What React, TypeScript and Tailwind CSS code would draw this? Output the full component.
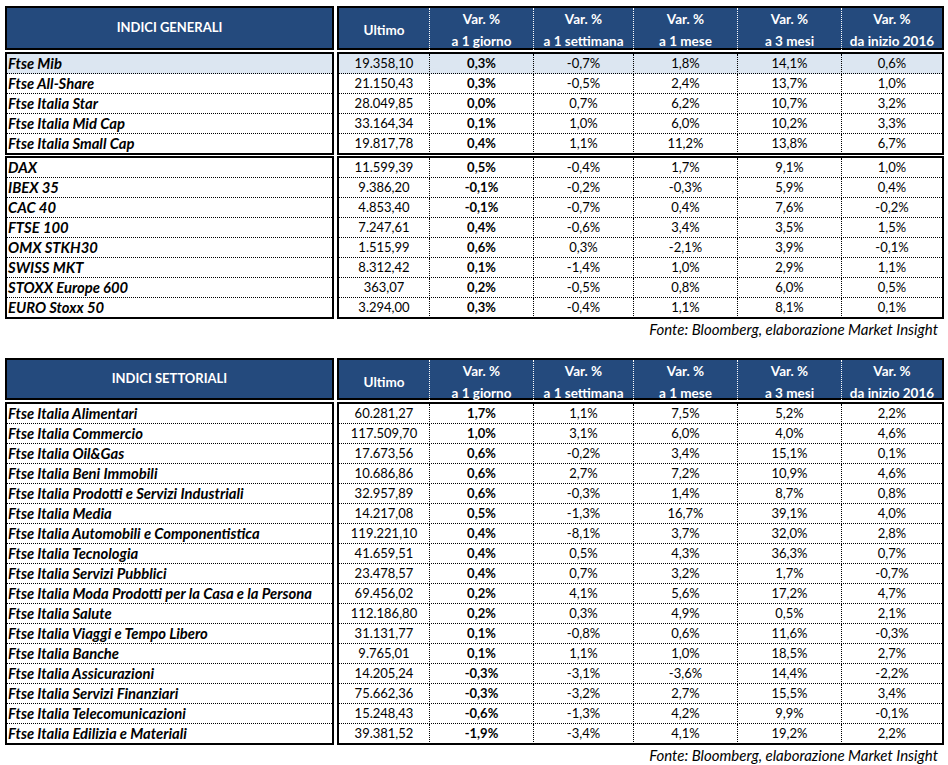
import React from "react";

type Row = [string, string, string, string, string, string, string];

const general1: Row[] = [
  ["Ftse Mib", "19.358,10", "0,3%", "-0,7%", "1,8%", "14,1%", "0,6%"],
  ["Ftse All-Share", "21.150,43", "0,3%", "-0,5%", "2,4%", "13,7%", "1,0%"],
  ["Ftse Italia Star", "28.049,85", "0,0%", "0,7%", "6,2%", "10,7%", "3,2%"],
  ["Ftse Italia Mid Cap", "33.164,34", "0,1%", "1,0%", "6,0%", "10,2%", "3,3%"],
  ["Ftse Italia Small Cap", "19.817,78", "0,4%", "1,1%", "11,2%", "13,8%", "6,7%"],
];

const general2: Row[] = [
  ["DAX", "11.599,39", "0,5%", "-0,4%", "1,7%", "9,1%", "1,0%"],
  ["IBEX 35", "9.386,20", "-0,1%", "-0,2%", "-0,3%", "5,9%", "0,4%"],
  ["CAC 40", "4.853,40", "-0,1%", "-0,7%", "0,4%", "7,6%", "-0,2%"],
  ["FTSE 100", "7.247,61", "0,4%", "-0,6%", "3,4%", "3,5%", "1,5%"],
  ["OMX STKH30", "1.515,99", "0,6%", "0,3%", "-2,1%", "3,9%", "-0,1%"],
  ["SWISS MKT", "8.312,42", "0,1%", "-1,4%", "1,0%", "2,9%", "1,1%"],
  ["STOXX Europe 600", "363,07", "0,2%", "-0,5%", "0,8%", "6,0%", "0,5%"],
  ["EURO Stoxx 50", "3.294,00", "0,3%", "-0,4%", "1,1%", "8,1%", "0,1%"],
];

const sector: Row[] = [
  ["Ftse Italia Alimentari", "60.281,27", "1,7%", "1,1%", "7,5%", "5,2%", "2,2%"],
  ["Ftse Italia Commercio", "117.509,70", "1,0%", "3,1%", "6,0%", "4,0%", "4,6%"],
  ["Ftse Italia Oil&Gas", "17.673,56", "0,6%", "-0,2%", "3,4%", "15,1%", "0,1%"],
  ["Ftse Italia Beni Immobili", "10.686,86", "0,6%", "2,7%", "7,2%", "10,9%", "4,6%"],
  ["Ftse Italia Prodotti e Servizi Industriali", "32.957,89", "0,6%", "-0,3%", "1,4%", "8,7%", "0,8%"],
  ["Ftse Italia Media", "14.217,08", "0,5%", "-1,3%", "16,7%", "39,1%", "4,0%"],
  ["Ftse Italia Automobili e Componentistica", "119.221,10", "0,4%", "-8,1%", "3,7%", "32,0%", "2,8%"],
  ["Ftse Italia Tecnologia", "41.659,51", "0,4%", "0,5%", "4,3%", "36,3%", "0,7%"],
  ["Ftse Italia Servizi Pubblici", "23.478,57", "0,4%", "0,7%", "3,2%", "1,7%", "-0,7%"],
  ["Ftse Italia Moda Prodotti per la Casa e la Persona", "69.456,02", "0,2%", "4,1%", "5,6%", "17,2%", "4,7%"],
  ["Ftse Italia Salute", "112.186,80", "0,2%", "0,3%", "4,9%", "0,5%", "2,1%"],
  ["Ftse Italia Viaggi e Tempo Libero", "31.131,77", "0,1%", "-0,8%", "0,6%", "11,6%", "-0,3%"],
  ["Ftse Italia Banche", "9.765,01", "0,1%", "1,1%", "1,0%", "18,5%", "2,7%"],
  ["Ftse Italia Assicurazioni", "14.205,24", "-0,3%", "-3,1%", "-3,6%", "14,4%", "-2,2%"],
  ["Ftse Italia Servizi Finanziari", "75.662,36", "-0,3%", "-3,2%", "2,7%", "15,5%", "3,4%"],
  ["Ftse Italia Telecomunicazioni", "15.248,43", "-0,6%", "-1,3%", "4,2%", "9,9%", "-0,1%"],
  ["Ftse Italia Edilizia e Materiali", "39.381,52", "-1,9%", "-3,4%", "4,1%", "19,2%", "2,2%"],
];

const GRID = "grid grid-cols-[90px_104px_100px_104px_104px_101px]";

const subHeads = ["a 1 giorno", "a 1 settimana", "a 1 mese", "a 3 mesi", "da inizio 2016"];

function Header({ title, h }: { title: string; h: string }) {
  return (
    <div className="flex gap-[3px]">
      <div
        className={`w-[329px] ${h} border-2 border-black bg-[#244a7d] flex items-center justify-center text-white font-bold text-[13px]`}
      >
        {title}
      </div>
      <div className={`w-[607px] ${h} border-2 border-black bg-[#244a7d] text-white font-bold text-[13.5px] ${GRID}`}>
        <div className="flex items-center justify-center">Ultimo</div>
        {subHeads.map((s) => (
          <div
            key={s}
            className="border-l border-dotted border-white flex flex-col items-center justify-center leading-[22px] overflow-visible"
          >
            <span className="whitespace-nowrap">Var. %</span>
            <span className="whitespace-nowrap">{s}</span>
          </div>
        ))}
      </div>
    </div>
  );
}

function Group({ rows, highlightFirst }: { rows: Row[]; highlightFirst?: boolean }) {
  const rowCls =
    "h-[20px] border-b border-dotted border-black last:h-[19px] last:border-b-0";
  return (
    <div className="flex gap-[3px]">
      <div className="w-[329px] border-2 border-black flex flex-col">
        {rows.map((r, i) => (
          <div
            key={r[0]}
            className={`${rowCls} flex items-center pl-[1px] font-bold italic text-[14.8px] text-black whitespace-nowrap ${
              highlightFirst && i === 0 ? "bg-[#dce6f1]" : ""
            }`}
          >
            {r[0]}
          </div>
        ))}
      </div>
      <div className="w-[607px] border-2 border-black flex flex-col">
        {rows.map((r, i) => (
          <div
            key={r[0]}
            className={`${rowCls} ${GRID} text-[13px] text-black ${
              highlightFirst && i === 0 ? "bg-[#dce6f1]" : ""
            }`}
          >
            {r.slice(1).map((v, j) => (
              <div
                key={j}
                className={`flex items-center justify-center ${j > 0 ? "border-l border-dotted border-black" : ""} ${
                  j === 1 ? "font-bold" : ""
                }`}
              >
                {v}
              </div>
            ))}
          </div>
        ))}
      </div>
    </div>
  );
}

function Fonte() {
  return (
    <div className="mt-[2px] pr-[6px] text-right italic text-[15px] leading-[16px] text-black">
      Fonte: Bloomberg, elaborazione Market Insight
    </div>
  );
}

export default function App() {
  return (
    <div
      className="w-[948px] h-[765px] bg-white pl-[5px] pt-[6px]"
      style={{ fontFamily: "Lato, 'Open Sans', sans-serif" }}
    >
      <div className="w-[939px] flex flex-col">
        <Header title="INDICI GENERALI" h="h-[44px]" />
        <div className="h-[2px]" />
        <Group rows={general1} highlightFirst />
        <div className="h-[1px]" />
        <Group rows={general2} />
        <Fonte />
        <div className="h-[21px]" />
        <Header title="INDICI SETTORIALI" h="h-[42px]" />
        <div className="h-[2px]" />
        <Group rows={sector} />
        <Fonte />
      </div>
    </div>
  );
}
